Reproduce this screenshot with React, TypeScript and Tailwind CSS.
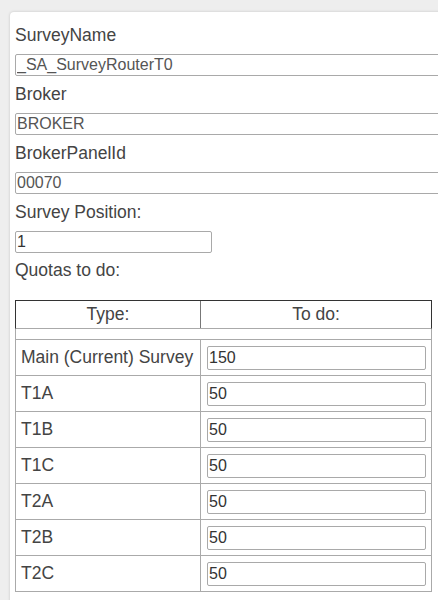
import React from 'react'

const quotas = [
  { name: 'Main (Current) Survey', todo: '150' },
  { name: 'T1A', todo: '50' },
  { name: 'T1B', todo: '50' },
  { name: 'T1C', todo: '50' },
  { name: 'T2A', todo: '50' },
  { name: 'T2B', todo: '50' },
  { name: 'T2C', todo: '50' },
]

function Field({ label, value, first }: { label: string; value: string; first?: boolean }) {
  return (
    <>
      <div className={`leading-[23px] mb-[7px] ${first ? '' : 'mt-[7px]'}`}>{label}</div>
      <input
        readOnly
        value={value}
        className="block w-full h-[22px] border border-[#a9a9a9] rounded-[2px] px-[1px] text-[16px] text-[#555] outline-none"
      />
    </>
  )
}

export default function App() {
  return (
    <div
      className="w-[438px] h-[600px] overflow-hidden bg-[#eeeeee] pt-[12px] pl-[10px]"
      style={{ fontFamily: '"Liberation Sans", Arial, sans-serif' }}
    >
      <div className="w-[480px] h-[620px] bg-white rounded-tl-[4px] shadow-[0_0_3px_rgba(0,0,0,0.18)] pl-[5px] pt-[12px] text-[17.5px] text-[#444]">
        <Field label="SurveyName" value="_SA_SurveyRouterT0" first />
        <Field label="Broker" value="BROKER" />
        <Field label="BrokerPanelId" value="00070" />
        <div className="leading-[23px] mb-[7px] mt-[7px]">Survey Position:</div>
        <input
          defaultValue="1"
          className="block w-[197px] h-[22px] border border-[#a9a9a9] rounded-[2px] px-[1px] text-[16px] text-[#333] outline-none"
        />
        <div className="leading-[23px] mt-[6px]">Quotas to do:</div>

        <div className="w-[417px] mt-[18px]">
          <div className="flex h-[29px] border-t border-l border-r border-[#333] border-b border-b-[#aaa]">
            <div className="w-[185px] border-r border-[#777] flex items-center justify-center">Type:</div>
            <div className="flex-1 flex items-center justify-center">To do:</div>
          </div>
          <div className="h-[11px] border-l border-r border-b border-[#aaa]" />
          {quotas.map((q) => (
            <div key={q.name} className="flex h-[36px] border-l border-r border-b border-[#aaa]">
              <div className="w-[185px] border-r border-[#aaa] flex items-center pl-[5px] whitespace-nowrap">
                {q.name}
              </div>
              <div className="flex-1 flex items-center">
                <input
                  defaultValue={q.todo}
                  className="ml-[6px] w-[219px] h-[24px] border border-[#a9a9a9] rounded-[2px] px-[1px] text-[16px] text-[#333] outline-none"
                />
              </div>
            </div>
          ))}
        </div>
      </div>
    </div>
  )
}
